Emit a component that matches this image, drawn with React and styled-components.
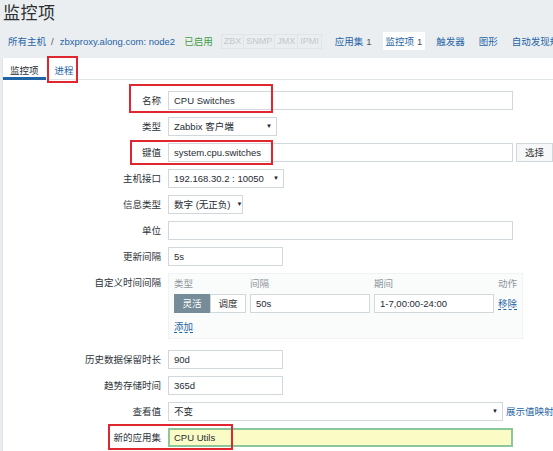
import React from 'react';
import styled, { createGlobalStyle } from 'styled-components';

const GlobalStyle = createGlobalStyle`
  html, body {
    margin: 0;
    padding: 0;
    background: #ebeef0;
  }
  body {
    font-family: "Liberation Sans", Arial, "Noto Sans CJK SC", sans-serif;
    font-size: 9.5px;
    color: #1f2c33;
    width: 553px;
    height: 451px;
    overflow: hidden;
  }
`;

const Page = styled.div`
  position: relative;
  width: 553px;
  height: 451px;
  overflow: hidden;
`;

const Header = styled.div`
  height: 58px;
  display: flex;
  flex-direction: column;
`;

const Title = styled.h1`
  margin: 0;
  padding: 1px 0 0 3px;
  font-size: 17px;
  line-height: 25px;
  font-weight: normal;
  color: #2b2f33;
  letter-spacing: 0.5px;
`;

const Nav = styled.div`
  display: flex;
  align-items: center;
  height: 18px;
  margin-top: 6px;
  padding-left: 8px;
  white-space: nowrap;
  overflow: hidden;
`;

const NavLink = styled.span`
  color: #1f65a6;
  margin-right: ${p => p.$mr ?? 14}px;
  padding: ${p => (p.$active ? '3px 3px' : '0')};
  background: ${p => (p.$active ? '#ffffff' : 'transparent')};
  margin-left: ${p => (p.$active ? '-3px' : '0')};
`;

const Sep = styled.span`
  color: #555;
  margin: 0 6px 0 5px;
`;

const Enabled = styled.span`
  color: #3f9e45;
  margin-right: 9px;
`;

const Badges = styled.div`
  display: flex;
  margin-right: 13px;
`;

const Badge = styled.span`
  border: 1px solid #dfe4e7;
  color: #c0c8cc;
  font-size: 9px;
  padding: 1px 2px;
  line-height: 11px;
  margin-left: -1px;
  background: #ebeef0;
`;

const Count = styled.span`
  color: #555;
  margin-left: 3px;
`;

const Panel = styled.div`
  background: #ffffff;
  margin-left: 2px;
  border-left: 1px solid #dfe4e7;
  height: 393px;
`;

const Tabs = styled.div`
  display: flex;
  height: 21px;
  border-bottom: 1px solid #dfe4e7;
`;

const Tab = styled.div`
  padding: 5px 7px 0;
  color: ${p => (p.$active ? '#1f2c33' : '#1f65a6')};
  border-bottom: 3px solid ${p => (p.$active ? '#1f65a6' : 'transparent')};
  margin-bottom: -1px;
  margin-right: 2px;
`;

const Form = styled.div`
  display: grid;
  grid-template-columns: 158px 1fr;
  column-gap: 7px;
  row-gap: 7px;
  padding-top: 11px;
`;

const Label = styled.div`
  text-align: right;
  line-height: 19px;
  color: #2d3338;
  white-space: nowrap;
`;

const Field = styled.div`
  display: flex;
  align-items: ${p => p.$top ? 'flex-start' : 'center'};
  gap: 3px;
  white-space: nowrap;
`;

const Input = styled.div`
  box-sizing: border-box;
  width: ${p => p.$w}px;
  height: 19px;
  line-height: 17px;
  padding: 0 5px;
  border: 1px solid #d1d8dc;
  background: #ffffff;
  color: #1f2c33;
  white-space: nowrap;
  overflow: hidden;
`;

const NewApp = styled(Input)`
  background: #fbfbc6;
  border: 2px solid #8cc79b;
  line-height: 15px;
  padding: 0 4px;
`;

const Select = styled(Input)`
  display: flex;
  justify-content: space-between;
  align-items: center;
  padding-right: 4px;
  &::after {
    content: '▼';
    font-size: 6px;
    color: #222;
    margin-left: 6px;
  }
`;

const Button = styled.div`
  box-sizing: border-box;
  width: 37px;
  height: 19px;
  line-height: 17px;
  text-align: center;
  border: 1px solid #d1d8dc;
  background: #f7f8f9;
  color: #333;
`;

const Link = styled.span`
  color: #1f65a6;
  border-bottom: ${p => (p.$dashed ? '1px dashed #1f65a6' : 'none')};
  line-height: 12px;
  white-space: nowrap;
`;

const IntervalBox = styled.div`
  box-sizing: border-box;
  width: 355px;
  height: 66px;
  background: #fafbfb;
  border: 1px solid #f0f2f3;
  padding: 4px 5px 0;
  margin-bottom: 4px;
`;

const IntervalGrid = styled.div`
  display: grid;
  grid-template-columns: 72px 120px 120px 1fr;
  column-gap: 4px;
  row-gap: 4px;
  align-items: center;
  white-space: nowrap;
`;

const ColHead = styled.div`
  color: #8d979c;
  line-height: 12px;
`;

const Segmented = styled.div`
  display: flex;
`;

const Segment = styled.div`
  box-sizing: border-box;
  width: 36px;
  height: 19px;
  line-height: 17px;
  text-align: center;
  border: 1px solid ${p => (p.$active ? '#768d99' : '#d1d8dc')};
  background: ${p => (p.$active ? '#768d99' : '#ffffff')};
  color: ${p => (p.$active ? '#ffffff' : '#333')};
`;

const AddRow = styled.div`
  margin-top: 8px;
`;

const Mark = styled.div`
  position: absolute;
  left: ${p => p.$x}px;
  top: ${p => p.$y}px;
  width: ${p => p.$w}px;
  height: ${p => p.$h}px;
  box-sizing: border-box;
  border: 2px solid #e0262e;
  pointer-events: none;
`;

const Row = ({ label, top, children }) => (
  <>
    <Label>{label}</Label>
    <Field $top={top}>{children}</Field>
  </>
);

export default function App() {
  return (
    <Page>
      <GlobalStyle />
      <Header>
        <Title>监控项</Title>
        <Nav>
          <NavLink $mr={0}>所有主机</NavLink>
          <Sep>/</Sep>
          <NavLink $mr={9}>zbxproxy.along.com: node2</NavLink>
          <Enabled>已启用</Enabled>
          <Badges>
            <Badge>ZBX</Badge>
            <Badge>SNMP</Badge>
            <Badge>JMX</Badge>
            <Badge>IPMI</Badge>
          </Badges>
          <NavLink>应用集<Count>1</Count></NavLink>
          <NavLink $active $mr={11}>监控项<Count>1</Count></NavLink>
          <NavLink>触发器</NavLink>
          <NavLink>图形</NavLink>
          <NavLink>自动发现规则</NavLink>
        </Nav>
      </Header>
      <Panel>
        <Tabs>
          <Tab $active>监控项</Tab>
          <Tab>进程</Tab>
        </Tabs>
        <Form>
          <Row label="名称"><Input $w={345}>CPU Switches</Input></Row>
          <Row label="类型"><Select $w={109}>Zabbix 客户端</Select></Row>
          <Row label="键值">
            <Input $w={345}>system.cpu.switches</Input>
            <Button>选择</Button>
          </Row>
          <Row label="主机接口"><Select $w={116}>192.168.30.2 : 10050</Select></Row>
          <Row label="信息类型"><Select $w={75}>数字 (无正负)</Select></Row>
          <Row label="单位"><Input $w={345} /></Row>
          <Row label="更新间隔"><Input $w={115}>5s</Input></Row>
          <Row label="自定义时间间隔" top>
            <IntervalBox>
              <IntervalGrid>
                <ColHead>类型</ColHead>
                <ColHead>间隔</ColHead>
                <ColHead>期间</ColHead>
                <ColHead>动作</ColHead>
                <Segmented>
                  <Segment $active>灵活</Segment>
                  <Segment>调度</Segment>
                </Segmented>
                <Input $w={120}>50s</Input>
                <Input $w={120}>1-7,00:00-24:00</Input>
                <div><Link $dashed>移除</Link></div>
              </IntervalGrid>
              <AddRow><Link $dashed>添加</Link></AddRow>
            </IntervalBox>
          </Row>
          <Row label="历史数据保留时长"><Input $w={115}>90d</Input></Row>
          <Row label="趋势存储时间"><Input $w={115}>365d</Input></Row>
          <Row label="查看值">
            <Select $w={335}>不变</Select>
            <Link>展示值映射</Link>
          </Row>
          <Row label="新的应用集"><NewApp $w={345}>CPU Utils</NewApp></Row>
        </Form>
      </Panel>
      <Mark $x={47} $y={56} $w={31} $h={27} />
      <Mark $x={129} $y={84} $w={144} $h={29} />
      <Mark $x={130} $y={140} $w={143} $h={25} />
      <Mark $x={108} $y={424} $w={125} $h={26} />
    </Page>
  );
}
